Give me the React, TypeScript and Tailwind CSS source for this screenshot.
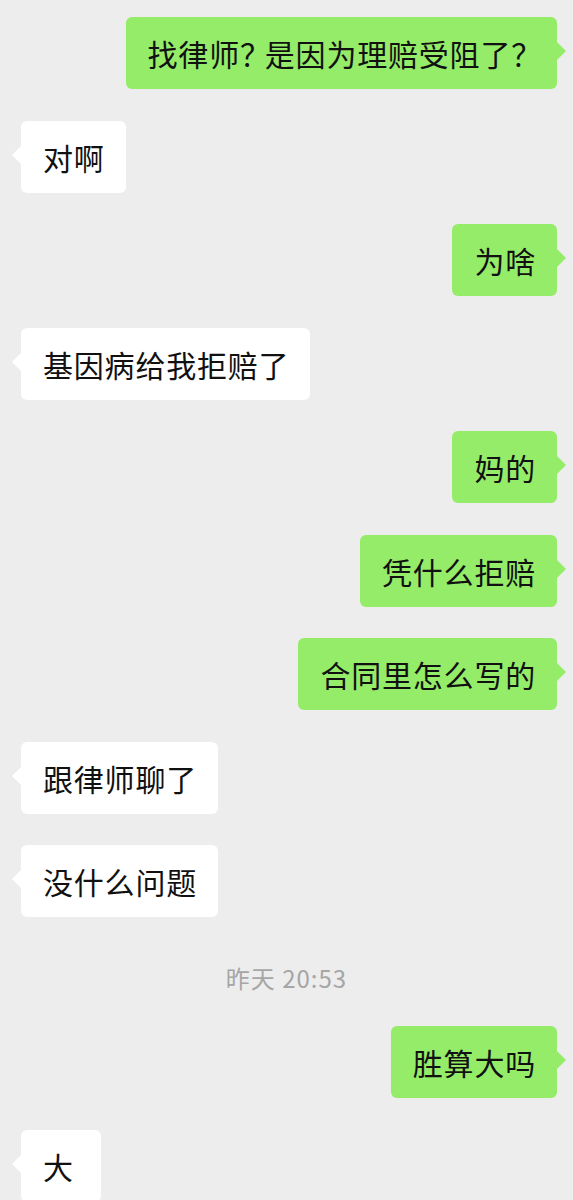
const messages: { id: number; side: 'me' | 'them' | 'time'; text: string }[] = [
  { id: 1, side: 'me', text: '找律师？是因为理赔受阻了？' },
  { id: 2, side: 'them', text: '对啊' },
  { id: 3, side: 'me', text: '为啥' },
  { id: 4, side: 'them', text: '基因病给我拒赔了' },
  { id: 5, side: 'me', text: '妈的' },
  { id: 6, side: 'me', text: '凭什么拒赔' },
  { id: 7, side: 'me', text: '合同里怎么写的' },
  { id: 8, side: 'them', text: '跟律师聊了' },
  { id: 9, side: 'them', text: '没什么问题' },
  { id: 10, side: 'time', text: '昨天 20:53' },
  { id: 11, side: 'me', text: '胜算大吗' },
  { id: 12, side: 'them', text: '大' },
];

const font = { fontFamily: '"Noto Sans CJK SC", "Noto Sans", sans-serif' };

// full-width question marks are narrower in the original font
const renderText = (text: string) =>
  text.split(/(？)/).map((part, i) =>
    part === '？' ? (
      <span key={i} className="tracking-[-5.2px]">
        {part}
      </span>
    ) : (
      part
    )
  );

const Bubble = ({ side, text }: { side: 'me' | 'them'; text: string }) => {
  const mine = side === 'me';
  return (
    <div className={mine ? 'flex justify-end pr-4' : 'flex justify-start pl-[21px]'}>
      <div
        className={
          'relative flex h-[72px] min-w-[80px] items-center whitespace-nowrap rounded-[6px] pl-[22px] pr-[21px] text-[30px] tracking-[0.8px] text-[#111] ' +
          (mine ? 'bg-[#95ec69]' : 'bg-white')
        }
      >
        <span className="leading-none">{renderText(text)}</span>
        {mine ? (
          <span className="absolute right-[-9px] top-[25px] h-0 w-0 border-y-[9px] border-l-[9px] border-y-transparent border-l-[#95ec69]" />
        ) : (
          <span className="absolute left-[-9px] top-[25px] h-0 w-0 border-y-[9px] border-r-[9px] border-y-transparent border-r-white" />
        )}
      </div>
    </div>
  );
};

export default function App() {
  return (
    <div className="h-[1200px] w-full overflow-hidden bg-[#ededed] pt-[17px]" style={font}>
      <div className="flex flex-col gap-[31.5px]">
        {messages.map((m) =>
          m.side === 'time' ? (
            <div key={m.id} className="mt-[14px] mb-[2px] text-center text-[24px] leading-[30px] tracking-[1px] text-[#a6a6a6]">
              {m.text}
            </div>
          ) : (
            <Bubble key={m.id} side={m.side} text={m.text} />
          )
        )}
      </div>
    </div>
  );
}
